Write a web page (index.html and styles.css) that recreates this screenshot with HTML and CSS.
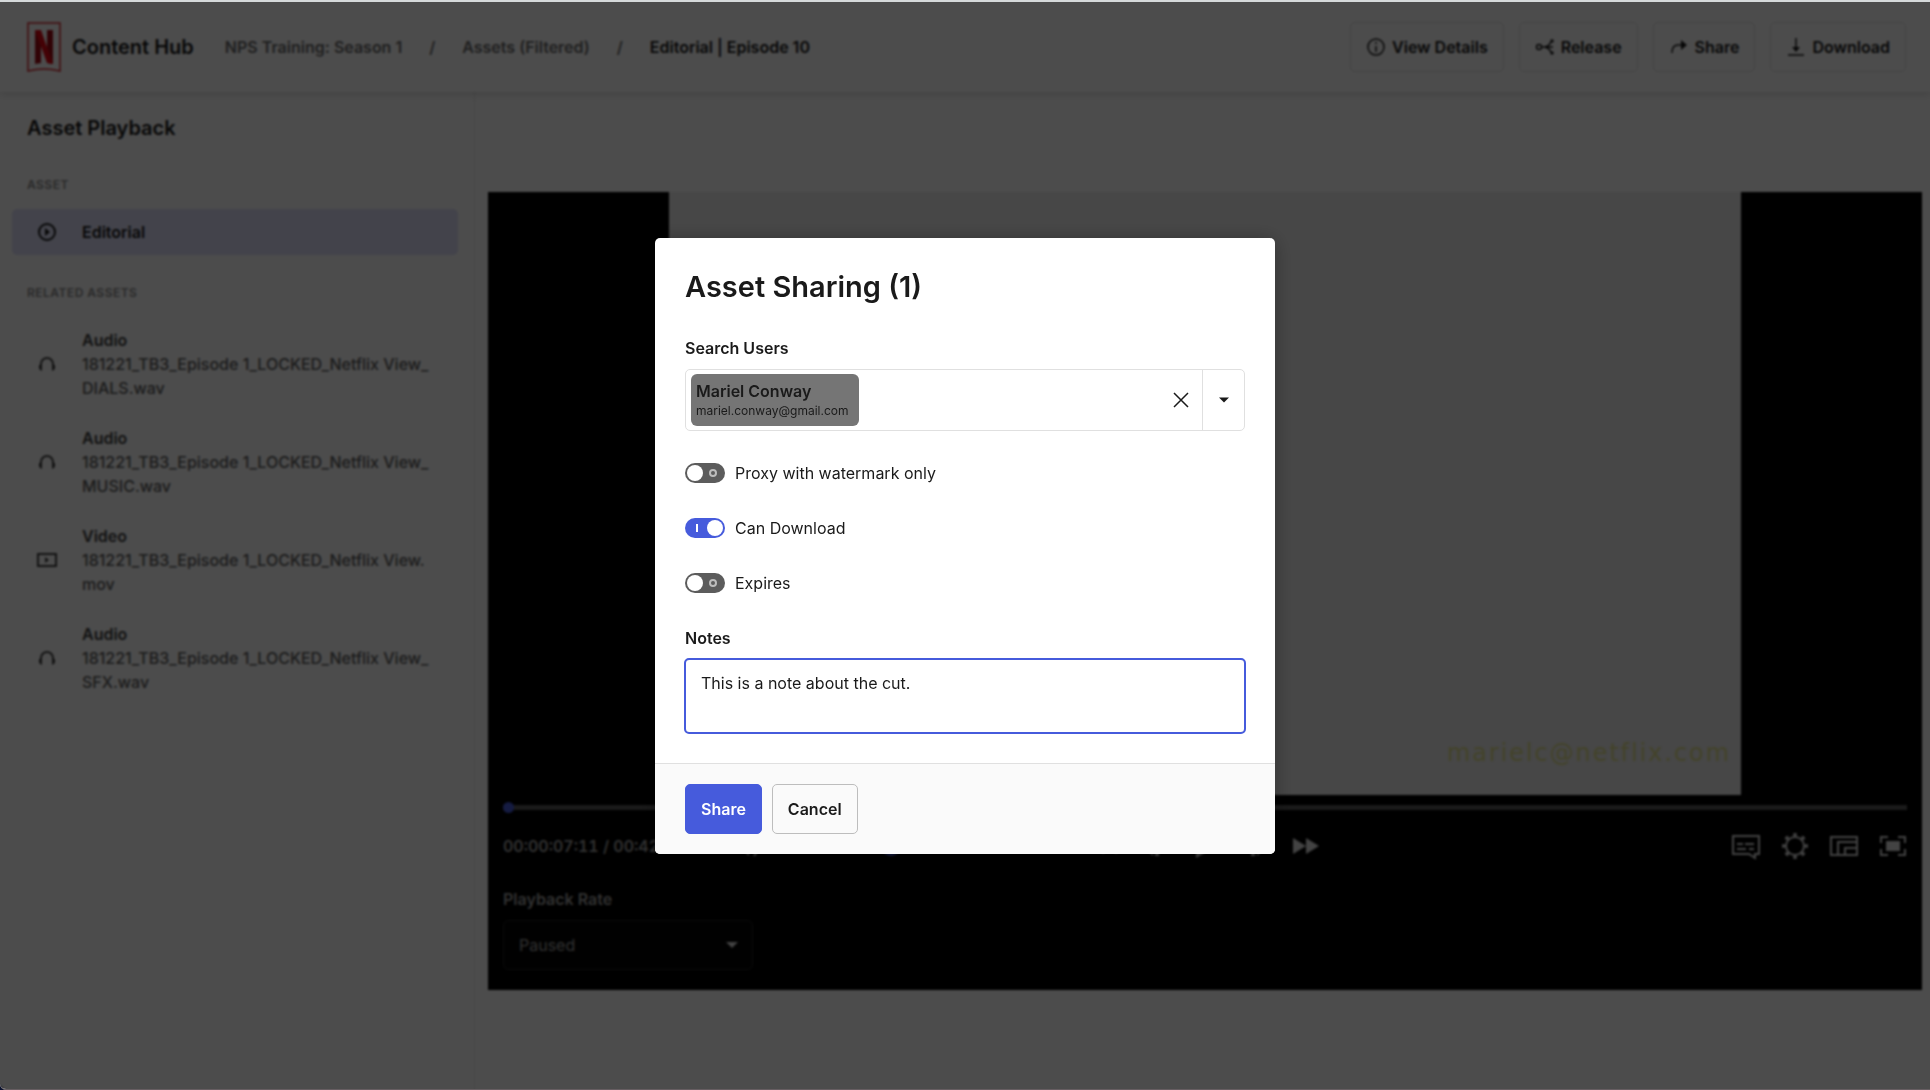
FILE: index.html
```html
<!DOCTYPE html>
<html lang="en">
<head>
	<meta charset="utf-8">
	<title>Content Hub - Asset Playback</title>
	<link rel="stylesheet" href="styles.css">
</head>
<body>
	<div class="app">
		<header class="topbar">
			<svg class="logo" width="34" height="50" viewBox="0 0 34 50">
				<path d="M1 1h32v48q-16-4-32 0z" fill="none" stroke="#d8232b" stroke-width="1.5"/>
				<path d="M8 8h6v33l-6 1zM20 8h6v34l-6-1z" fill="#a50d16"/>
				<path d="M8 8h6l12 34-6-1z" fill="#e50914"/>
			</svg>
			<span class="brand">Content Hub</span>
			<nav class="crumbs">
				<a href="#">NPS Training: Season 1</a>
				<span>/</span>
				<a href="#">Assets (Filtered)</a>
				<span>/</span>
				<strong>Editorial | Episode 10</strong>
			</nav>
			<div class="actions">
				<button class="btn">
					<svg width="20" height="20" viewBox="0 0 20 20"><circle cx="10" cy="10" r="8"/><path d="M10 9v6M10 5v2"/></svg>
					View Details
				</button>
				<button class="btn">
					<svg width="20" height="20" viewBox="0 0 20 20"><circle cx="4" cy="10" r="2.5"/><path d="M6 10h12M10 10q4-1 6-5M10 10q4 1 6 5"/><circle cx="17" cy="4" r="1"/><circle cx="17" cy="16" r="1"/></svg>
					Release
				</button>
				<button class="btn">
					<svg width="20" height="20" viewBox="0 0 20 20"><path d="M3 16q0-8 6-8h7"/><path class="solid" d="M12 3l6 5-6 5z"/></svg>
					Share
				</button>
				<button class="btn">
					<svg width="20" height="20" viewBox="0 0 20 20"><path d="M10 1v11M2 18h16"/><path class="solid" d="M6 10h8l-4 5z"/></svg>
					Download
				</button>
			</div>
		</header>

		<div class="content">
			<aside class="sidebar">
				<h2>Asset Playback</h2>
				<h3>Asset</h3>
				<a class="asset asset-active" href="#">
					<svg width="20" height="20" viewBox="0 0 20 20"><circle cx="10" cy="10" r="8"/><path class="solid" d="M8 6l5 4-5 4z"/></svg>
					<strong>Editorial</strong>
				</a>
				<h3>Related Assets</h3>
				<a class="asset" href="#">
					<svg width="20" height="20" viewBox="0 0 20 20"><path d="M4 13v-3a6 6 0 0 1 12 0v3"/><path class="solid" d="M2 11h3v6q-3-1-3-3zM18 11h-3v6q3-1 3-3z"/></svg>
					<span><strong>Audio</strong><br>181221_TB3_Episode 1_LOCKED_Netflix View_<wbr>DIALS.wav</span>
				</a>
				<a class="asset" href="#">
					<svg width="20" height="20" viewBox="0 0 20 20"><path d="M4 13v-3a6 6 0 0 1 12 0v3"/><path class="solid" d="M2 11h3v6q-3-1-3-3zM18 11h-3v6q3-1 3-3z"/></svg>
					<span><strong>Audio</strong><br>181221_TB3_Episode 1_LOCKED_Netflix View_<wbr>MUSIC.wav</span>
				</a>
				<a class="asset" href="#">
					<svg width="20" height="20" viewBox="0 0 20 20"><path d="M1 4h18v12H1z"/><path class="solid" d="M8 7l4 3-4 3z"/></svg>
					<span><strong>Video</strong><br>181221_TB3_Episode 1_LOCKED_Netflix View.<wbr>mov</span>
				</a>
				<a class="asset" href="#">
					<svg width="20" height="20" viewBox="0 0 20 20"><path d="M4 13v-3a6 6 0 0 1 12 0v3"/><path class="solid" d="M2 11h3v6q-3-1-3-3zM18 11h-3v6q3-1 3-3z"/></svg>
					<span><strong>Audio</strong><br>181221_TB3_Episode 1_LOCKED_Netflix View_<wbr>SFX.wav</span>
				</a>
			</aside>

			<main class="stage">
				<section class="player">
					<div class="screen"><span class="watermark">marielc@netflix.com</span></div>
					<div class="panel">
						<input class="timeline" type="range" min="0" max="100" value="0" aria-label="Position">
						<div class="controls">
							<div class="controls-left">
								<span class="time">00:00:07:11 / 00:42:17:05</span>
								<button class="icon" aria-label="Mute">
									<svg width="24" height="24" viewBox="0 0 24 24"><path class="solid" d="M1 8h5l6-6v20l-6-6H1z"/><path d="M15 7q4 5 0 10M17 2q8 10 0 20"/></svg>
								</button>
								<input class="volume" type="range" min="0" max="100" value="100" aria-label="Volume">
							</div>
							<div class="transport">
								<button class="icon" aria-label="Rewind"><svg width="26" height="24" viewBox="0 0 26 24"><path class="solid" d="M13 4v16L0 12zM26 4v16l-13-8z"/></svg></button>
								<button class="icon" aria-label="Previous frame"><svg width="24" height="24" viewBox="0 0 24 24"><path class="solid" d="M12 2h4v20h-4zM10 2v20L0 12z"/></svg></button>
								<button class="icon" aria-label="Play"><svg width="24" height="24" viewBox="0 0 24 24"><path class="solid" d="M3 0v24l20-12z"/></svg></button>
								<button class="icon" aria-label="Next frame"><svg width="24" height="24" viewBox="0 0 24 24"><path class="solid" d="M8 2h4v20H8zM14 2v20l10-10z"/></svg></button>
								<button class="icon" aria-label="Fast forward"><svg width="26" height="24" viewBox="0 0 26 24"><path class="solid" d="M0 4v16l13-8zM13 4v16l13-8z"/></svg></button>
							</div>
							<div class="controls-right">
								<button class="icon" aria-label="Subtitles"><svg width="30" height="28" viewBox="0 0 30 28"><path d="M2 4h26v18h-4v4l-6-4H2zM6 12h6M14 12h9M6 17h9M18 17h5"/></svg></button>
								<button class="icon" aria-label="Settings"><svg width="28" height="28" viewBox="0 0 28 28"><circle cx="14" cy="14" r="9"/><circle class="teeth" cx="14" cy="14" r="11" pathLength="80"/></svg></button>
								<button class="icon" aria-label="Mini player"><svg width="30" height="28" viewBox="0 0 30 28"><path d="M2 5h26v18H2zM9 23V10h19M16 23v-7h12"/></svg></button>
								<button class="icon" aria-label="Full screen"><svg width="28" height="28" viewBox="0 0 28 28"><path d="M2 11V5h7M19 5h7v6M26 17v6h-7M9 23H2v-6"/><path class="solid" d="M7 9h14v10H7z"/></svg></button>
							</div>
						</div>
						<label class="rate-label" for="rate">Playback Rate</label>
						<div class="rate">
							<select id="rate"><option>Paused</option><option>1x</option><option>2x</option></select>
							<svg class="caret" width="12" height="6" viewBox="0 0 12 6"><path d="M0 0h12L6 6z"/></svg>
						</div>
					</div>
				</section>
			</main>
		</div>

		<div class="overlay">
			<form class="modal" role="dialog" aria-labelledby="share-title">
				<div class="modal-body">
					<h1 id="share-title">Asset Sharing (1)</h1>
					<div class="field">
						<label for="users">Search Users</label>
						<div class="combo">
							<div class="chip">
								<strong>Mariel Conway</strong>
								<span>mariel.conway@gmail.com</span>
							</div>
							<input id="users" type="text" autocomplete="off">
							<button type="button" class="combo-clear" aria-label="Clear">
								<svg width="16" height="16" viewBox="0 0 16 16"><path d="M1 1l14 14M15 1L1 15"/></svg>
							</button>
							<button type="button" class="combo-open" aria-label="Open">
								<svg class="caret" width="10" height="6" viewBox="0 0 12 6"><path d="M0 0h12L6 6z"/></svg>
							</button>
						</div>
					</div>
					<label class="toggle"><input type="checkbox"><span class="switch"></span>Proxy with watermark only</label>
					<label class="toggle"><input type="checkbox" checked><span class="switch"></span>Can Download</label>
					<label class="toggle"><input type="checkbox"><span class="switch"></span>Expires</label>
					<div class="field">
						<label for="notes">Notes</label>
						<textarea id="notes">This is a note about the cut.</textarea>
					</div>
				</div>
				<footer class="modal-footer">
					<button type="button" class="btn btn-primary">Share</button>
					<button type="button" class="btn btn-cancel">Cancel</button>
				</footer>
			</form>
		</div>
	</div>
</body>
</html>
```
FILE: styles.css
```css
*, *::before, *::after {
	box-sizing: border-box;
}

html {
	background: #0b1230;
}

body {
	margin: 0;
	font-family: Inter, "Liberation Sans", sans-serif;
	font-size: 16px;
	line-height: 24px;
	color: #1a1a1a;
}

button, input, select, textarea {
	font: inherit;
	color: inherit;
}

button {
	cursor: pointer;
}

strong {
	font-weight: 600;
}

a {
	color: inherit;
	text-decoration: none;
}

svg {
	flex: none;
	fill: none;
	stroke: currentColor;
	stroke-width: 2;
}

.solid {
	fill: currentColor;
	stroke: none;
}

.app {
	position: relative;
	display: flex;
	flex-direction: column;
	min-height: 100vh;
	background: #fff;
	border-top: 2px solid #d5d9da;
	border-bottom: 1px solid #675e62;
	border-bottom-left-radius: 6px;
	overflow: hidden;
}

/* top bar */

.topbar {
	display: flex;
	align-items: center;
	height: 90px;
	padding: 0 24px 0 27px;
	box-shadow: 0 2px 8px rgba(0, 0, 0, .15);
	z-index: 1;
}

.logo {
	stroke: none;
}

.brand {
	margin-left: 11px;
	font-size: 20px;
	font-weight: 600;
}

.crumbs {
	display: flex;
	gap: 27px;
	margin-left: 31px;
	font-weight: 600;
	color: #6a6a6a;
}

.crumbs strong {
	color: #1a1a1a;
}

.actions {
	display: flex;
	gap: 15px;
	margin-left: auto;
}

.btn {
	display: flex;
	align-items: center;
	gap: 6px;
	height: 50px;
	padding: 0 15px;
	background: none;
	border: 1px solid #e0e0e0;
	border-radius: 5px;
	font-weight: 600;
}

.actions svg {
	stroke-width: 1.5;
}

/* sidebar */

.content {
	flex: 1;
	display: flex;
}

.sidebar {
	width: 475px;
	padding: 24px 16px 24px 12px;
	border-right: 1px solid #ebebeb;
}

.sidebar h2 {
	margin: 0 15px 33px;
	font-size: 20px;
	font-weight: 600;
}

.sidebar h3 {
	margin: 26px 15px 12px;
	font-size: 12px;
	font-weight: 600;
	letter-spacing: .04em;
	text-transform: uppercase;
	color: #8c8c8c;
}

.asset {
	display: flex;
	align-items: center;
	gap: 25px;
	padding: 11px 10px 15px 25px;
	font-weight: 500;
	color: #5c5c5c;
}

.asset strong, .asset svg {
	color: #404040;
}

.asset-active {
	padding: 11px 25px;
	background: #e0e1fa;
	border-radius: 5px;
}

.asset-active strong, .asset-active svg {
	color: #1a1a1a;
}

/* player */

.stage {
	flex: 1;
	display: flex;
	align-items: center;
	padding: 0 8px 0 13px;
}

.player {
	flex: 1;
	background: #000;
}

.screen {
	position: relative;
	height: calc(100vh - 487px);
	max-width: 100%;
	margin: 0 auto;
	aspect-ratio: 16 / 9;
	background: #ededed;
}

.watermark {
	position: absolute;
	right: 10px;
	bottom: 24px;
	font-family: "DejaVu Sans", sans-serif;
	font-size: 24px;
	line-height: 36px;
	letter-spacing: .08em;
	color: #e0e08c;
}

.panel {
	padding: 0 15px 20px;
	color: #dcdcdc;
}

.timeline, .volume {
	display: block;
	width: 100%;
	height: 26px;
	margin: 0;
	appearance: none;
	background: linear-gradient(#585858, #585858) center / 100% 5px no-repeat;
}

.timeline::-webkit-slider-thumb, .volume::-webkit-slider-thumb {
	appearance: none;
	width: 11px;
	height: 11px;
	border-radius: 50%;
	background: #465bdc;
}

.volume::-webkit-slider-thumb {
	width: 20px;
	height: 20px;
}

.controls {
	display: grid;
	grid-template-columns: 1fr auto 1fr;
	align-items: center;
	height: 50px;
}

.controls-left, .transport, .controls-right {
	display: flex;
	align-items: center;
	gap: 20px;
}

.transport {
	gap: 26px;
}

.controls-right {
	justify-content: flex-end;
}

.time {
	width: 214px;
	white-space: nowrap;
	font-weight: 600;
	font-variant-numeric: tabular-nums;
	color: #a6a6a6;
}

.volume {
	width: 120px;
}

.icon {
	display: flex;
	padding: 0;
	background: none;
	border: 0;
	color: #e0e0e0;
}

.teeth {
	stroke-width: 4;
	stroke-dasharray: 4 6;
	stroke-dashoffset: 2;
}

.rate-label {
	display: block;
	margin: 16px 0 9px;
	font-weight: 600;
	color: #a6a6a6;
}

.rate {
	display: grid;
	align-items: center;
	width: 250px;
}

.rate select, .rate .caret {
	grid-area: 1 / 1;
}

.rate .caret {
	justify-self: end;
	margin-right: 15px;
	pointer-events: none;
}

.rate select {
	height: 50px;
	padding: 0 15px;
	appearance: none;
	background: #050505;
	border: 1px solid #262626;
	border-radius: 5px;
	color: #a6a6a6;
}

.caret {
	fill: currentColor;
	stroke: none;
}

/* share dialog */

.overlay {
	position: absolute;
	inset: 0;
	z-index: 2;
	display: flex;
	align-items: center;
	justify-content: center;
	background: rgba(0, 0, 0, .7);
	backdrop-filter: blur(1px);
}

.modal {
	width: 620px;
	background: #fff;
	border-radius: 5px;
	box-shadow: 0 2px 20px rgba(0, 0, 0, .3);
	overflow: hidden;
}

.modal-body {
	display: flex;
	flex-direction: column;
	gap: 30px;
	padding: 30px;
}

.modal h1 {
	margin: 0;
	font-size: 29px;
	font-weight: 600;
	line-height: 38px;
}

.field {
	display: flex;
	flex-direction: column;
	gap: 9px;
}

.field label {
	font-weight: 600;
}

.combo {
	display: flex;
	align-items: stretch;
	height: 62px;
	border: 1px solid #e0e0e0;
	border-radius: 5px;
}

.chip {
	display: flex;
	flex-direction: column;
	justify-content: center;
	margin: 4px 5px;
	padding: 0 10px 0 5px;
	background: #757575;
	border-radius: 6px;
}

.chip strong {
	line-height: 22px;
}

.chip span {
	font-size: 12px;
	line-height: 18px;
}

.combo input {
	flex: 1;
	min-width: 0;
	border: 0;
	outline: 0;
	background: none;
}

.combo button {
	display: flex;
	align-items: center;
	justify-content: center;
	width: 42px;
	padding: 0;
	background: none;
	border: 0;
}

.combo-clear svg {
	stroke-width: 1.5;
}

.combo .combo-open {
	border-left: 1px solid #e0e0e0;
}

.toggle {
	display: flex;
	align-items: center;
	gap: 10px;
	line-height: 25px;
}

.toggle input {
	position: absolute;
	opacity: 0;
}

.switch {
	display: flex;
	align-items: center;
	justify-content: space-between;
	width: 40px;
	height: 20px;
	padding: 0 8px 0 2px;
	border-radius: 10px;
	background: #5c5c5c;
}

.switch::before {
	content: "";
	width: 16px;
	height: 16px;
	border-radius: 50%;
	background: #fff;
}

.switch::after {
	content: "";
	width: 8px;
	height: 8px;
	border: 2px solid #bdbdbd;
	border-radius: 50%;
}

.toggle input:checked + .switch {
	flex-direction: row-reverse;
	padding: 0 2px 0 11px;
	background: #465bdc;
}

.toggle input:checked + .switch::after {
	width: 2px;
	border: 0;
	border-radius: 0;
	background: #fff;
}

.field textarea {
	display: block;
	height: 74px;
	padding: 11px 15px;
	border: 1px solid #e0e0e0;
	border-radius: 4px;
	outline: 2px solid #465bdc;
	outline-offset: -1px;
	resize: none;
}

.modal-footer {
	display: flex;
	gap: 10px;
	padding: 20px 30px;
	background: #fafafa;
	border-top: 1px solid #e0e0e0;
}

.btn-primary {
	background: #465bdc;
	border-color: #465bdc;
	color: #fff;
}

.btn-cancel {
	border-color: #bdbdbd;
}
```
